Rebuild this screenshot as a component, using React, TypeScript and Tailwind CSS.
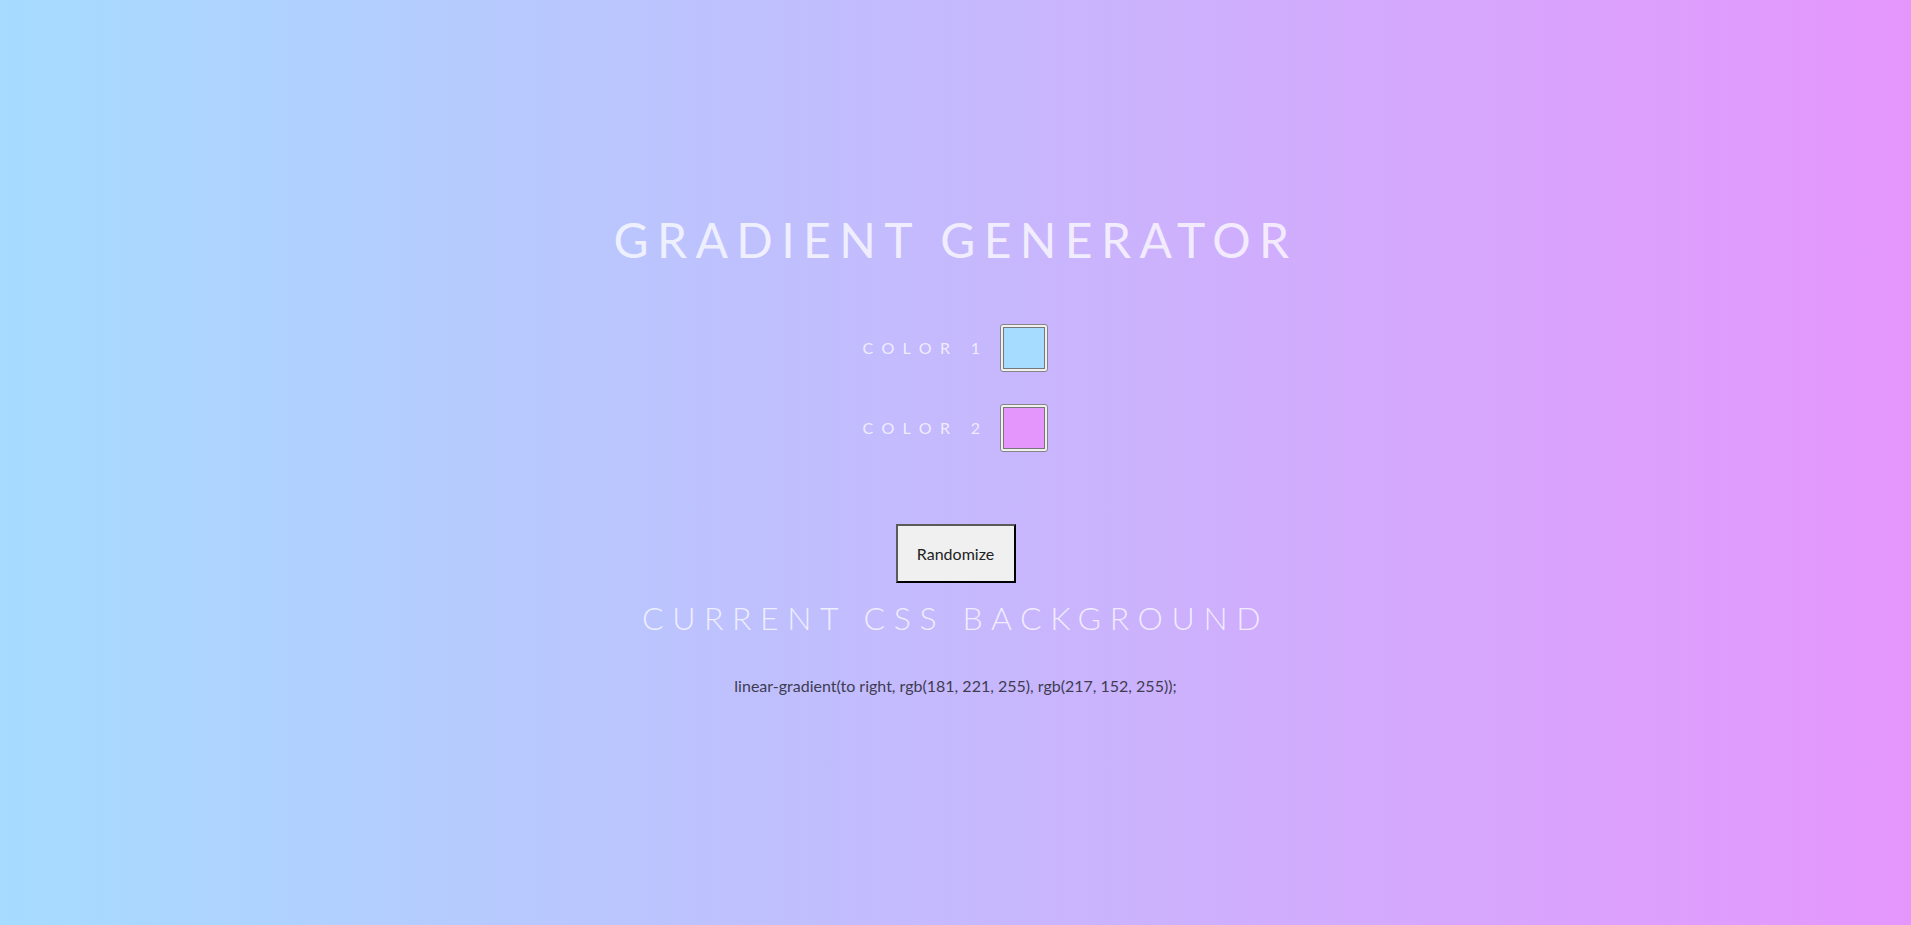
import { useState } from 'react'

// Gradient generator: two colour pickers, a randomize button and the css readout

function toHex(n: number) {
  return n.toString(16).padStart(2, '0')
}

function hexToRgb(hex: string) {
  const v = hex.replace('#', '')
  return `rgb(${parseInt(v.slice(0, 2), 16)}, ${parseInt(v.slice(2, 4), 16)}, ${parseInt(v.slice(4, 6), 16)})`
}

function randomHex() {
  const r = Math.floor(Math.random() * 256)
  const g = Math.floor(Math.random() * 256)
  const b = Math.floor(Math.random() * 256)
  return `#${toHex(r)}${toHex(g)}${toHex(b)}`
}

function Swatch({ value, onChange }: { value: string; onChange: (v: string) => void }) {
  return (
    <div className="relative w-[48px] h-[48px] rounded-[3px] border border-[#858585] bg-[#f0f0f0] p-[2px]">
      <div className="w-full h-full border border-[#777777]" style={{ backgroundColor: value }} />
      <input
        type="color"
        value={value}
        onChange={(e) => onChange(e.target.value)}
        className="absolute inset-0 w-full h-full opacity-0 cursor-pointer"
      />
    </div>
  )
}

export default function App() {
  const [color1, setColor1] = useState('#a6dcff')
  const [color2, setColor2] = useState('#e596fc')
  const [cssText, setCssText] = useState(
    'linear-gradient(to right, rgb(181, 221, 255), rgb(217, 152, 255));'
  )

  const update = (a: string, b: string) => {
    setColor1(a)
    setColor2(b)
    setCssText(`linear-gradient(to right, ${hexToRgb(a)}, ${hexToRgb(b)});`)
  }

  return (
    <div
      className="min-h-screen w-full flex flex-col items-center text-center font-['Lato','Liberation_Sans',sans-serif]"
      style={{ backgroundImage: `linear-gradient(to right, ${color1}, ${color2})` }}
    >
      <h1 className="mt-[212px] text-[48px] leading-[56px] font-normal tracking-[8.4px] text-white/75">
        GRADIENT GENERATOR
      </h1>

      {/* Pickers */}
      <div className="mt-[56px] flex flex-col items-center gap-[32px]">
        <div className="flex items-center h-[48px] gap-[12px]">
          <span className="text-[16px] tracking-[8.4px] text-white/75">COLOR 1</span>
          <Swatch value={color1} onChange={(v) => update(v, color2)} />
        </div>
        <div className="flex items-center h-[48px] gap-[12px]">
          <span className="text-[16px] tracking-[8.4px] text-white/75">COLOR 2</span>
          <Swatch value={color2} onChange={(v) => update(color1, v)} />
        </div>
      </div>

      <button
        onClick={() => update(randomHex(), randomHex())}
        className="mt-[72px] h-[59px] w-[120px] bg-[#f0f0f0] text-[16px] text-[#222] border-2 border-t-[#5a5a5a] border-l-[#5a5a5a] border-r-black border-b-black"
      >
        Randomize
      </button>

      <h3 className="mt-[15px] text-[32px] leading-[40px] font-light tracking-[8.6px] text-white/75">
        CURRENT CSS BACKGROUND
      </h3>

      <p className="mt-[36px] text-[16px] leading-[24px] text-[#3f3c52]">{cssText}</p>
    </div>
  )
}
